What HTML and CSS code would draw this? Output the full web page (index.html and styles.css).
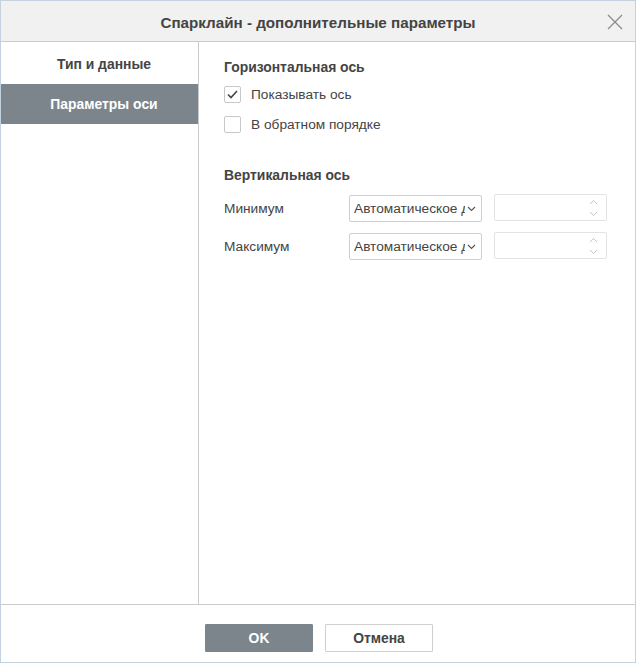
FILE: index.html
```html
<!DOCTYPE html>
<html lang="ru">
<head>
	<meta charset="UTF-8">
	<title>Спарклайн - дополнительные параметры</title>
	<link rel="stylesheet" href="styles.css">
</head>
<body>
	<div class="dialog">
		<div class="head">
			<span class="title">Спарклайн - дополнительные параметры</span>
			<svg class="close" width="16" height="16" viewBox="0 0 16 16">
				<path d="M1 1 L15 15 M15 1 L1 15" stroke="#8a8a8a" stroke-width="1.2" fill="none"/>
			</svg>
		</div>
		<div class="main">
			<div class="side">
				<div class="tab">Тип и данные</div>
				<div class="tab active">Параметры оси</div>
			</div>
			<div class="content">
				<div class="group">Горизонтальная ось</div>
				<div class="check first">
					<span class="box">
						<svg width="15" height="15" viewBox="0 0 15 15"><path d="M3 7.5 L6 10.5 L12 4" stroke="#444" stroke-width="1.6" fill="none"/></svg>
					</span>
					<span>Показывать ось</span>
				</div>
				<div class="check">
					<span class="box"></span>
					<span>В обратном порядке</span>
				</div>

				<div class="group vert">Вертикальная ось</div>
				<div class="row">
					<span class="lbl">Минимум</span>
					<div class="combo">
						<span class="val">Автоматическое для каждого</span>
						<svg width="9" height="6" viewBox="0 0 9 6"><path d="M1 1 L4.5 4.5 L8 1" stroke="#555" stroke-width="1.1" fill="none"/></svg>
					</div>
					<div class="spin">
						<svg width="9" height="6" viewBox="0 0 9 6"><path d="M1 5 L4.5 1.5 L8 5" stroke="#c4c4c4" stroke-width="1" fill="none"/></svg>
						<svg width="9" height="6" viewBox="0 0 9 6"><path d="M1 1 L4.5 4.5 L8 1" stroke="#c4c4c4" stroke-width="1" fill="none"/></svg>
					</div>
				</div>
				<div class="row">
					<span class="lbl">Максимум</span>
					<div class="combo">
						<span class="val">Автоматическое для каждого</span>
						<svg width="9" height="6" viewBox="0 0 9 6"><path d="M1 1 L4.5 4.5 L8 1" stroke="#555" stroke-width="1.1" fill="none"/></svg>
					</div>
					<div class="spin">
						<svg width="9" height="6" viewBox="0 0 9 6"><path d="M1 5 L4.5 1.5 L8 5" stroke="#c4c4c4" stroke-width="1" fill="none"/></svg>
						<svg width="9" height="6" viewBox="0 0 9 6"><path d="M1 1 L4.5 4.5 L8 1" stroke="#c4c4c4" stroke-width="1" fill="none"/></svg>
					</div>
				</div>
			</div>
		</div>
		<div class="foot">
			<button class="btn ok">OK</button>
			<button class="btn">Отмена</button>
		</div>
	</div>
</body>
</html>
```

FILE: styles.css
```css
html, body{
	margin: 0;
	padding: 0;
	background: #fff;
}
.dialog{
	width: 636px;
	height: 663px;
	box-sizing: border-box;
	border: 1px solid #c4d1de;
	display: flex;
	flex-direction: column;
	font-family: "Liberation Sans", Arial, sans-serif;
	font-size: 13.7px;
	color: #444;
}
.head{
	height: 40px;
	background: #f1f1f1;
	border-bottom: 1px solid #cbcbcb;
	display: flex;
	align-items: center;
	justify-content: center;
	position: relative;
}
.title{
	font-size: 15.2px;
	font-weight: bold;
	color: #444;
	margin-top: 2px;
}
.close{
	position: absolute;
	right: 12px;
	top: 13px;
}
.main{
	flex: 1;
	display: flex;
}
.side{
	width: 197px;
	border-right: 1px solid #cbcbcb;
	padding-top: 2px;
}
.tab{
	height: 40px;
	line-height: 40px;
	text-align: center;
	font-weight: bold;
	font-size: 13.9px;
	color: #444;
	padding-left: 9px;
}
.tab.active{
	background: #7d858c;
	color: #fff;
}
.content{
	flex: 1;
	padding: 16px 0 0 25px;
}
.group{
	font-weight: bold;
	font-size: 13.9px;
	line-height: 18px;
	height: 18px;
}
.group.vert{
	margin-top: 32px;
}
.check{
	display: flex;
	align-items: center;
	height: 20px;
	margin-top: 10px;
}
.check.first{
	margin-top: 8px;
}
.box{
	width: 15px;
	height: 15px;
	border: 1px solid #c8c8c8;
	border-radius: 2px;
	margin-right: 10px;
	display: flex;
	align-items: center;
	justify-content: center;
	background: #fff;
}
.row{
	display: flex;
	align-items: center;
	height: 28px;
	margin-top: 10px;
}
.lbl{
	width: 125px;
}
.combo{
	width: 122px;
	height: 25px;
	border: 1px solid #cfcfcf;
	border-radius: 2px;
	display: flex;
	align-items: center;
	padding: 0 5px 0 4px;
	margin-top: 1px;
}
.val{
	flex: 1;
	white-space: nowrap;
	overflow: hidden;
	color: #444;
}
.combo svg{
	margin-left: 2px;
	flex: none;
}
.spin{
	width: 103px;
	height: 25px;
	border: 1px solid #e3e3e3;
	border-radius: 2px;
	margin-left: 12px;
	margin-top: -1px;
	display: flex;
	flex-direction: column;
	align-items: flex-end;
	justify-content: center;
	gap: 6px;
	padding-right: 8px;
}
.foot{
	height: 58px;
	box-sizing: border-box;
	border-top: 1px solid #cbcbcb;
	display: flex;
	justify-content: center;
	gap: 12px;
	padding: 19px 0 0 2px;
}
.btn{
	width: 108px;
	height: 28px;
	border: 1px solid #cfcfcf;
	border-radius: 1px;
	background: #fff;
	font-family: "Liberation Sans", Arial, sans-serif;
	font-size: 13.9px;
	font-weight: bold;
	color: #444;
	padding: 0;
}
.btn.ok{
	background: #7d858c;
	border-color: #7d858c;
	color: #fff;
}
```
